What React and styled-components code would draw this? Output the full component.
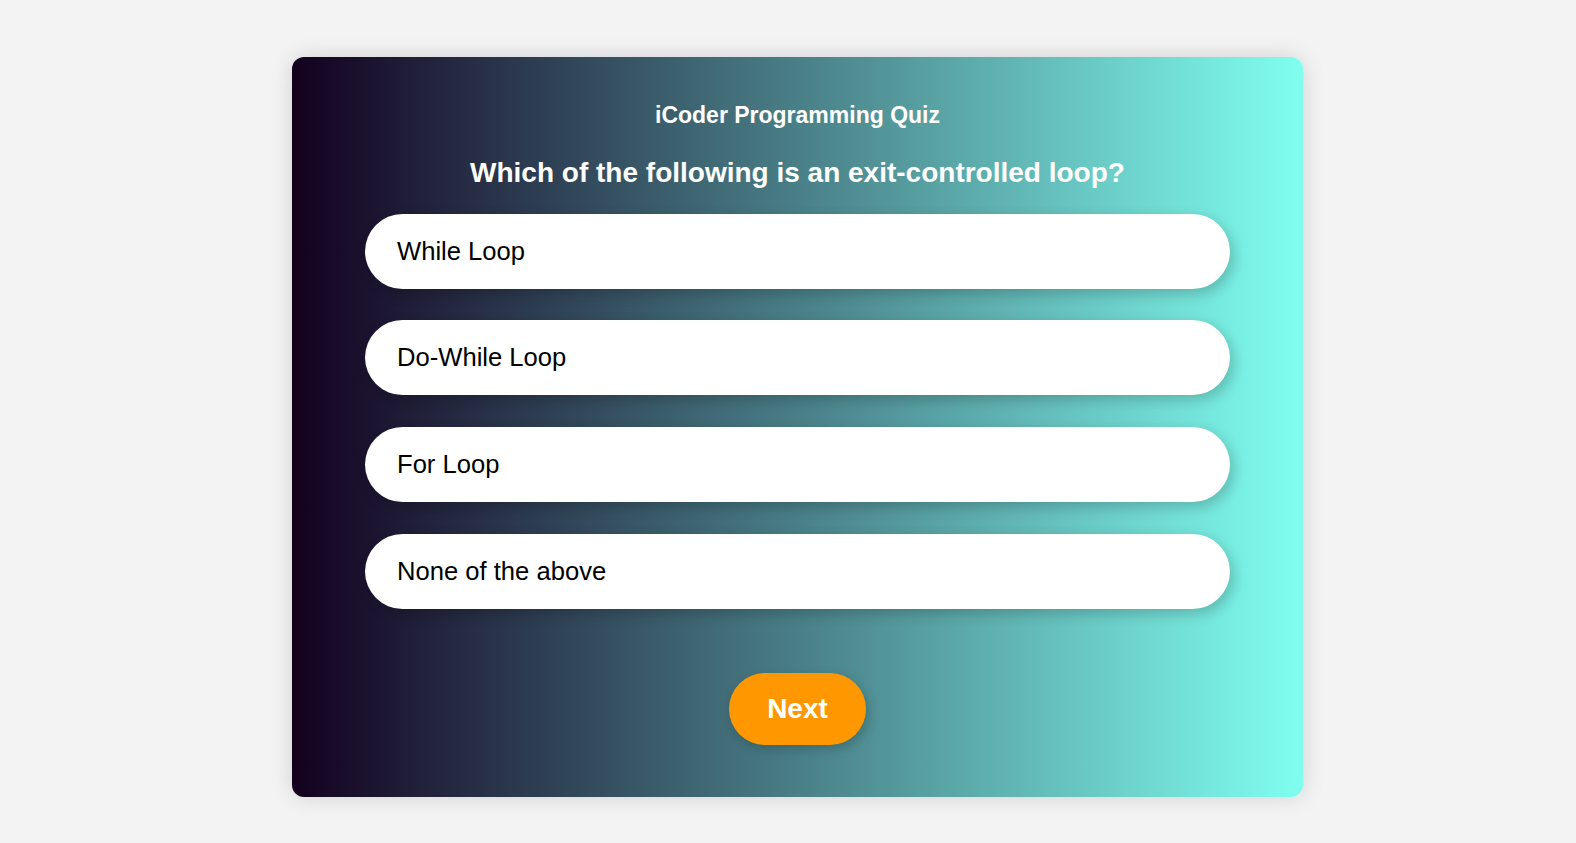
import React from "react";
import styled, { createGlobalStyle } from "styled-components";

const Global = createGlobalStyle`
  html, body { margin: 0; padding: 0; }
  body {
    background: #f3f3f3;
    font-family: "Liberation Sans", Arial, sans-serif;
    min-height: 843px;
  }
`;

const Page = styled.div`
  padding: 57px 0 46px 292px;
`;

const Card = styled.div`
  width: 1011px;
  height: 740px;
  box-sizing: border-box;
  border-radius: 12px;
  background: linear-gradient(to right, #13001f, #80fff0);
  box-shadow: 0 0 22px rgba(0, 0, 0, 0.14);
  padding: 45px 73px 0;
  display: flex;
  flex-direction: column;
  align-items: center;
`;

const Title = styled.h1`
  margin: 0;
  font-size: 23px;
  font-weight: 700;
  color: #ffffff;
  text-align: center;
`;

const Question = styled.h2`
  margin: 28px 0 0;
  font-size: 28px;
  font-weight: 700;
  color: #ffffff;
  text-align: center;
`;

const Options = styled.div`
  width: 100%;
  margin-top: 24.5px;
  display: flex;
  flex-direction: column;
  gap: 31.7px;
`;

const Option = styled.button`
  height: 75px;
  width: 100%;
  border: none;
  border-radius: 38px;
  background: #ffffff;
  color: #000000;
  font-family: "Liberation Sans", Arial, sans-serif;
  font-size: 25.6px;
  text-align: left;
  padding: 0 32px;
  box-shadow: 4px 5px 14px rgba(0, 0, 0, 0.2);
  cursor: pointer;
`;

const NextButton = styled.button`
  margin-top: 64px;
  width: 137px;
  height: 72px;
  border: none;
  border-radius: 36px;
  background: #ff9800;
  color: #ffffff;
  font-family: "Liberation Sans", Arial, sans-serif;
  font-size: 28px;
  font-weight: 700;
  box-shadow: 3px 4px 12px rgba(0, 0, 0, 0.2);
  cursor: pointer;
`;

const options = ["While Loop", "Do-While Loop", "For Loop", "None of the above"];

export default function App() {
  return (
    <>
      <Global />
      <Page>
        <Card>
          <Title>iCoder Programming Quiz</Title>
          <Question>Which of the following is an exit-controlled loop?</Question>
          <Options>
            {options.map((o) => (
              <Option key={o}>{o}</Option>
            ))}
          </Options>
          <NextButton>Next</NextButton>
        </Card>
      </Page>
    </>
  );
}
